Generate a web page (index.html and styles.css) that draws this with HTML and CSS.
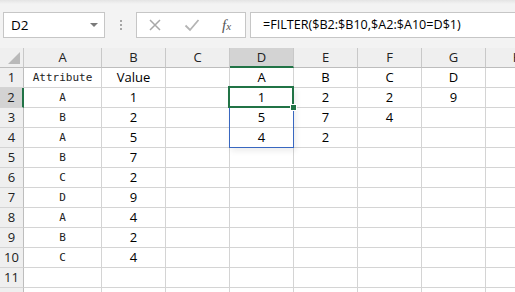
FILE: index.html
```html
<!DOCTYPE html>
<html lang="en">
<head>
  <meta charset="UTF-8">
  <title>FILTER - Sheet1</title>
  <link rel="stylesheet" href="styles.css">
</head>
<body>

  <div class="toolbar">
    <div class="namebox">
      <span>D2</span>
      <span class="arrow"></span>
    </div>
    <div class="grip"><i></i><i></i><i></i></div>
    <div class="fx-buttons">
      <svg width="14" height="14" viewBox="0 0 14 14"><path d="M2 2 L12 12 M12 2 L2 12" stroke="#a8a8a8" stroke-width="1.5" fill="none"/></svg>
      <svg width="16" height="14" viewBox="0 0 16 14"><path d="M1.5 7.5 L6 12 L14.5 2" stroke="#b4b4b4" stroke-width="1.8" fill="none"/></svg>
      <span class="fx">f<sub>x</sub></span>
    </div>
    <div class="formula">=FILTER($B2:$B10,$A2:$A10=D$1)</div>
  </div>

  <div class="sheet">
    <div class="row head">
      <div class="corner"><span class="tri"></span></div>
      <div>A</div><div>B</div><div>C</div><div class="sel-col">D</div><div>E</div><div>F</div><div>G</div><div>H</div>
    </div>
    <div class="row">
      <div class="num">1</div>
      <div class="mono">Attribute</div><div>Value</div><div></div><div>A</div><div>B</div><div>C</div><div>D</div><div></div>
    </div>
    <div class="row">
      <div class="num sel-row">2</div>
      <div class="mono">A</div><div>1</div><div></div>
      <div class="active">1
        <span class="spill"></span>
        <span class="cursor"></span>
        <span class="handle"></span>
      </div>
      <div>2</div><div>2</div><div>9</div><div></div>
    </div>
    <div class="row">
      <div class="num">3</div>
      <div class="mono">B</div><div>2</div><div></div><div>5</div><div>7</div><div>4</div><div></div><div></div>
    </div>
    <div class="row">
      <div class="num">4</div>
      <div class="mono">A</div><div>5</div><div></div><div>4</div><div>2</div><div></div><div></div><div></div>
    </div>
    <div class="row">
      <div class="num">5</div>
      <div class="mono">B</div><div>7</div><div></div><div></div><div></div><div></div><div></div><div></div>
    </div>
    <div class="row">
      <div class="num">6</div>
      <div class="mono">C</div><div>2</div><div></div><div></div><div></div><div></div><div></div><div></div>
    </div>
    <div class="row">
      <div class="num">7</div>
      <div class="mono">D</div><div>9</div><div></div><div></div><div></div><div></div><div></div><div></div>
    </div>
    <div class="row">
      <div class="num">8</div>
      <div class="mono">A</div><div>4</div><div></div><div></div><div></div><div></div><div></div><div></div>
    </div>
    <div class="row">
      <div class="num">9</div>
      <div class="mono">B</div><div>2</div><div></div><div></div><div></div><div></div><div></div><div></div>
    </div>
    <div class="row">
      <div class="num">10</div>
      <div class="mono">C</div><div>4</div><div></div><div></div><div></div><div></div><div></div><div></div>
    </div>
    <div class="row">
      <div class="num">11</div>
      <div></div><div></div><div></div><div></div><div></div><div></div><div></div><div></div>
    </div>
    <div class="row">
      <div class="num"></div>
      <div></div><div></div><div></div><div></div><div></div><div></div><div></div><div></div>
    </div>
  </div>

</body>
</html>
```

FILE: styles.css
```css
body {
  margin: 0;
  background: #fff;
  font-family: 'Open Sans', sans-serif;
  font-size: 13px;
  color: #000;
  overflow: hidden;
}

.toolbar {
  height: 48px;
  box-sizing: border-box;
  padding: 12px 0 0 3px;
  background: linear-gradient(#e4e4e4, #f3f3f3 4px);
  display: flex;
  align-items: flex-start;
}

.namebox {
  width: 102px;
  height: 26px;
  box-sizing: border-box;
  border: 1px solid #c6c6c6;
  background: #fff;
  display: flex;
  align-items: center;
  justify-content: space-between;
  padding: 0 6px 0 7px;
  font-size: 13.5px;
}

.arrow {
  width: 0;
  height: 0;
  border-left: 4px solid transparent;
  border-right: 4px solid transparent;
  border-top: 4px solid #7a7a7a;
}

.grip {
  width: 31px;
  height: 26px;
  display: flex;
  flex-direction: column;
  align-items: center;
  justify-content: center;
  gap: 2px;
}

.grip i {
  width: 2px;
  height: 2px;
  background: #a6a6a6;
}

.fx-buttons {
  width: 110px;
  height: 26px;
  box-sizing: border-box;
  border: 1px solid #c6c6c6;
  background: #fff;
  display: flex;
  align-items: center;
  padding: 0 0 0 11px;
  gap: 22px;
}

.fx {
  font-family: 'Liberation Serif', serif;
  font-style: italic;
  font-size: 15px;
  color: #555;
}

.fx sub {
  font-size: 11px;
  vertical-align: 0;
}

.formula {
  flex: 1;
  margin-left: 4px;
  height: 26px;
  box-sizing: border-box;
  border: 1px solid #c6c6c6;
  border-right: none;
  background: #fff;
  padding-left: 12px;
  line-height: 24px;
  font-size: 12.6px;
  white-space: nowrap;
}

.row {
  display: grid;
  grid-template-columns: 24px 78px 64px 64px 64px 64px 64px 64px 64px;
  height: 20px;
}

.row > div {
  box-sizing: border-box;
  border-right: 1px solid #d4d4d4;
  border-bottom: 1px solid #d4d4d4;
  text-align: center;
  line-height: 19px;
  white-space: nowrap;
  overflow: hidden;
}

.head > div {
  background: #efefef;
  border-right-color: #c8c8c8;
  border-bottom-color: #bdbdbd;
  color: #222;
}

.corner {
  position: relative;
}

.tri {
  position: absolute;
  right: 3px;
  bottom: 3px;
  width: 0;
  height: 0;
  border-left: 12px solid transparent;
  border-bottom: 12px solid #b9b9b9;
}

.head > .sel-col {
  background: #d3d3d3;
  border-bottom: 2px solid #217346;
}

.num {
  background: #efefef;
  border-right-color: #bdbdbd !important;
  color: #222;
}

.num.sel-row {
  background: #d3d3d3;
  border-right: 2px solid #217346 !important;
}

.mono {
  font-family: 'DejaVu Sans Mono', monospace;
  font-size: 11px;
  color: #222;
}

.row > .active {
  position: relative;
  overflow: visible;
}

.spill {
  position: absolute;
  left: -1px;
  top: -1px;
  width: 65px;
  height: 61px;
  box-sizing: border-box;
  border: 1px solid #3867c0;
  box-shadow: 2px 3px 6px rgba(0,0,0,0.08);
}

.cursor {
  position: absolute;
  left: -2px;
  top: -2px;
  right: -1px;
  bottom: -1px;
  border: 2px solid #217346;
}

.handle {
  position: absolute;
  left: 61px;
  top: 17px;
  width: 5px;
  height: 5px;
  background: #217346;
  outline: 1px solid #fff;
}
```
